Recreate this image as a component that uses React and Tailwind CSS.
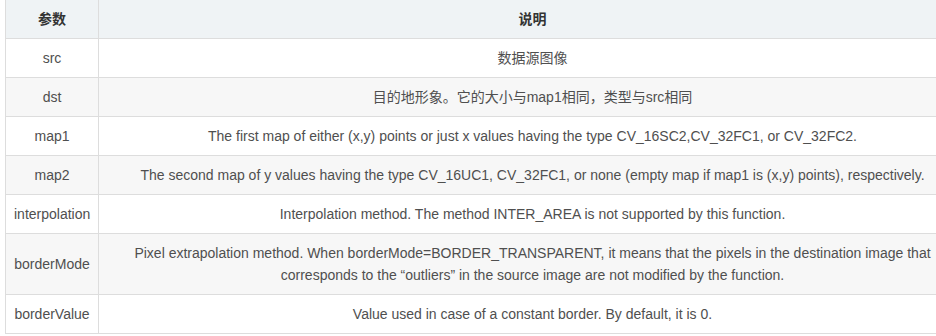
const rows = [
    ['src', '数据源图像'],
    ['dst', '目的地形象。它的大小与map1相同，类型与src相同'],
    ['map1', 'The first map of either (x,y) points or just x values having the type CV_16SC2,CV_32FC1, or CV_32FC2.'],
    ['map2', 'The second map of y values having the type CV_16UC1, CV_32FC1, or none (empty map if map1 is (x,y) points), respectively.'],
    ['interpolation', 'Interpolation method. The method INTER_AREA is not supported by this function.'],
    ['borderMode', (
        <>
            Pixel extrapolation method. When borderMode=BORDER_TRANSPARENT, it means that the pixels in the destination image that
            <br />
            corresponds to the “outliers” in the source image are not modified by the function.
        </>
    )],
    ['borderValue', 'Value used in case of a constant border. By default, it is 0.'],
];

export default function App() {
    return (
        <div
            className="w-[936px] h-[336px] overflow-hidden bg-white"
            style={{ fontFamily: '"Liberation Sans", "Noto Sans CJK SC", sans-serif' }}
        >
            <table className="ml-[5px] w-[962px] table-fixed border-collapse text-[14px] leading-[22px] text-[#4f4f4f]">
                <colgroup>
                    <col className="w-[93px]" />
                    <col />
                </colgroup>
                <thead>
                    <tr className="bg-[#eff3f5]">
                        <th className="h-[38px] px-2 py-2 border-x border-b border-[#dddddd] font-bold text-[#333]">参数</th>
                        <th className="h-[38px] px-2 py-2 border-x border-b border-[#dddddd] font-bold text-[#333]">说明</th>
                    </tr>
                </thead>
                <tbody>
                    {rows.map(([name, desc], i) => (
                        <tr key={name} className={i % 2 === 1 ? 'bg-[#f7f7f7]' : 'bg-white'}>
                            <td className="px-2 py-2 border border-[#dddddd] text-center">{name}</td>
                            <td className="px-2 py-2 border border-[#dddddd] text-center">{desc}</td>
                        </tr>
                    ))}
                </tbody>
            </table>
        </div>
    );
}
